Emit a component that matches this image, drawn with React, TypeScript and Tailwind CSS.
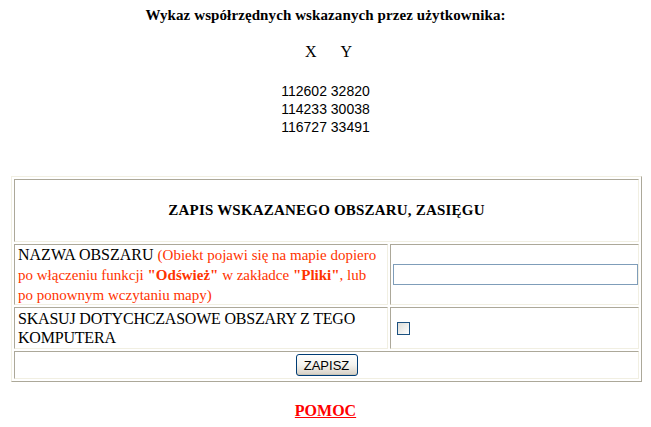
import React from "react";

const serif = "font-['Liberation_Serif','Times_New_Roman',serif]";
const sans = "font-['Liberation_Sans',Arial,sans-serif]";

// inset cell, as an old-style table with border=1
const cell = "border border-t-[#aca899] border-l-[#aca899] border-b-[#f1efe2] border-r-[#f1efe2] bg-white";

const COORDS = [
  ["112602", "32820"],
  ["114233", "30038"],
  ["116727", "33491"],
];

function Checkbox() {
  return (
    <div className="w-[13px] h-[13px] border border-[#1c5180] bg-gradient-to-br from-[#dcdcd7] to-white" />
  );
}

export default function App() {
  return (
    <div className={`${serif} w-[651px] h-[427px] bg-white text-black text-[16px] flex flex-col items-center`}>
      <p className="mt-[6px] font-bold text-[15px] leading-[18px] tracking-[0.1px]">
        Wykaz współrzędnych wskazanych przez użytkownika:
      </p>

      <p className="mt-[19px] pl-[6px] leading-[18px]">X&nbsp;&nbsp;&nbsp;&nbsp;&nbsp;&nbsp;Y</p>

      <div className={`${sans} mt-[21px] text-[14px] leading-[18px] text-center`}>
        {COORDS.map(([x, y]) => (
          <div key={x}>
            {x} {y}
          </div>
        ))}
      </div>

      {/* zapis obszaru */}
      <div className="mt-[40px] self-start ml-[11px] w-[631px] border border-t-[#f1efe2] border-l-[#f1efe2] border-b-[#aca899] border-r-[#aca899] p-[2px] flex flex-col gap-[2px]">
        <div className={`${cell} h-[63px] flex items-center justify-center`}>
          <span className="font-bold text-[15px] tracking-[0.2px]">ZAPIS WSKAZANEGO OBSZARU, ZASIĘGU</span>
        </div>

        <div className="grid grid-cols-[374px_1fr] gap-[2px]">
          <div className={`${cell} h-[61px] flex items-center px-[3px] leading-[19px] whitespace-nowrap`}>
            <div>
              NAZWA OBSZARU{" "}
              <span className="text-[#ff3300] text-[15px]">
                (Obiekt pojawi się na mapie dopiero
                <br />
                po włączeniu funkcji <b>"Odśwież"</b> w zakładce <b>"Pliki"</b>, lub
                <br />
                po ponownym wczytaniu mapy)
              </span>
            </div>
          </div>
          <div className={`${cell} flex items-center pl-[2px]`}>
            <input
              type="text"
              className="w-[245px] h-[21px] border border-[#7f9db9] bg-white outline-none px-1 text-[13px]"
            />
          </div>
        </div>

        <div className="grid grid-cols-[374px_1fr] gap-[2px]">
          <div className={`${cell} h-[42px] flex items-center px-[3px] leading-[19px] tracking-[-0.2px]`}>
            <div>
              SKASUJ DOTYCHCZASOWE OBSZARY Z TEGO
              <br />
              KOMPUTERA
            </div>
          </div>
          <div className={`${cell} flex items-center pl-[6px]`}>
            <Checkbox />
          </div>
        </div>

        <div className={`${cell} h-[28px] flex items-center justify-center`}>
          <button
            className={`${sans} w-[62px] h-[22px] rounded-[3px] border border-[#003c74] bg-gradient-to-b from-white via-[#f4f3ee] to-[#d6d0c5] text-[13px] leading-none text-black shadow-[inset_0_-1px_0_#c9c6b8]`}
          >
            ZAPISZ
          </button>
        </div>
      </div>

      <a href="#" className="mt-[20px] font-bold text-[#ff0000] underline leading-[18px]">
        POMOC
      </a>
    </div>
  );
}
